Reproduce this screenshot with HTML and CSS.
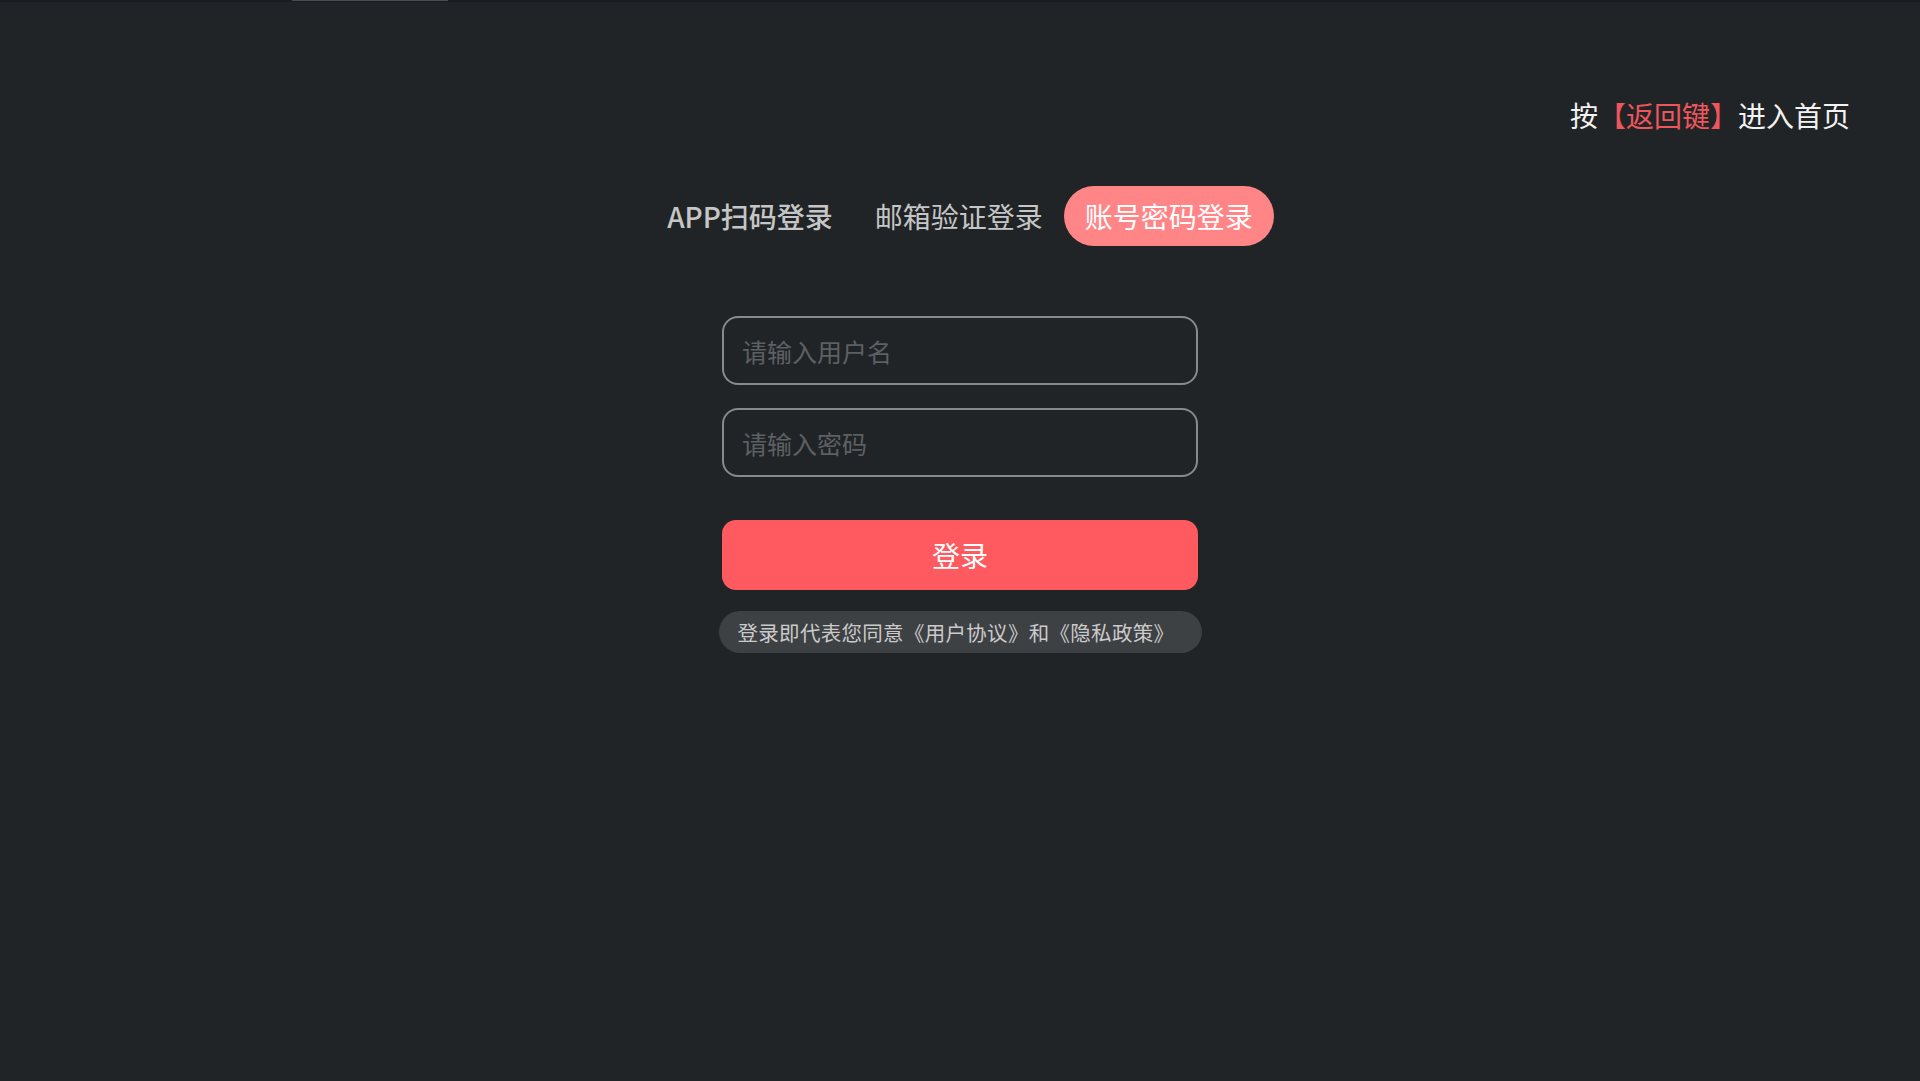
FILE: index.html
```html
<!DOCTYPE html>
<html lang="zh-CN">

<head>
	<meta charset="UTF-8">
	<meta name="viewport" content="width=device-width, initial-scale=1.0">
	<title>登录</title>
	<link rel="stylesheet" href="styles.css">
</head>

<body>
	<div class="topbar">
		<div class="topbar-thumb"></div>
	</div>
	<div class="header">
		<p class="back-hint">按<span class="key">【返回键】</span>进入首页</p>
	</div>
	<div class="tabs">
		<div class="tab tab-app">APP扫码登录</div>
		<div class="tab">邮箱验证登录</div>
		<div class="tab active">账号密码登录</div>
	</div>
	<form class="login" onsubmit="return false">
		<input class="field" type="text" placeholder="请输入用户名">
		<input class="field" type="password" placeholder="请输入密码">
		<button class="submit" type="submit">登录</button>
		<div class="agreement">登录即代表您同意《用户协议》和《隐私政策》</div>
	</form>
</body>

</html>
```

FILE: styles.css
```css
body {
	margin: 0;
	height: 1081px;
	overflow: hidden;
	background-color: #212427;
	font-family: "Noto Sans CJK SC", "Noto Sans", sans-serif;
	color: #c8c8c8;
}

.topbar {
	height: 2px;
	background-color: #1b1c23;
}

.topbar-thumb {
	margin-left: 292px;
	width: 156px;
	height: 1px;
	background-color: #4b4c52;
}

.header {
	display: flex;
	justify-content: flex-end;
	padding-right: 70px;
	margin-top: 93px;
}

.back-hint {
	margin: 0;
	font-size: 28px;
	line-height: 40px;
	color: #f2f2f2;
}

.key {
	color: #ee565c;
}

.tabs {
	display: flex;
	justify-content: center;
	margin-top: 51px;
}

.tab {
	height: 60px;
	padding: 0 21px;
	font-size: 28px;
	line-height: 60px;
	border-radius: 30px;
	color: #c6c6c6;
}

.tab-app {
	font-weight: 500;
}

.tab.active {
	background-color: #ff8587;
	color: #ffffff;
}

.login {
	display: flex;
	flex-direction: column;
	align-items: center;
	width: 476px;
	margin: 70px auto 0;
}

.field {
	box-sizing: border-box;
	width: 100%;
	height: 69px;
	padding: 0 18px;
	border: 2px solid #88898b;
	border-radius: 16px;
	background: transparent;
	font-family: inherit;
	font-size: 25px;
	color: #e0e0e0;
	outline: none;
}

.field + .field {
	margin-top: 23px;
}

.field::placeholder {
	color: #5d6063;
}

.submit {
	width: 100%;
	height: 70px;
	margin-top: 43px;
	border: none;
	border-radius: 14px;
	background-color: #ff5a5f;
	color: #ffffff;
	font-family: inherit;
	font-size: 28px;
	cursor: pointer;
}

.agreement {
	box-sizing: border-box;
	width: 483px;
	height: 42px;
	margin-top: 21px;
	padding: 0 19px;
	border-radius: 21px;
	background-color: #3e4143;
	font-size: 20.5px;
	letter-spacing: 0.3px;
	line-height: 42px;
	white-space: nowrap;
	color: #cacaca;
}
```
